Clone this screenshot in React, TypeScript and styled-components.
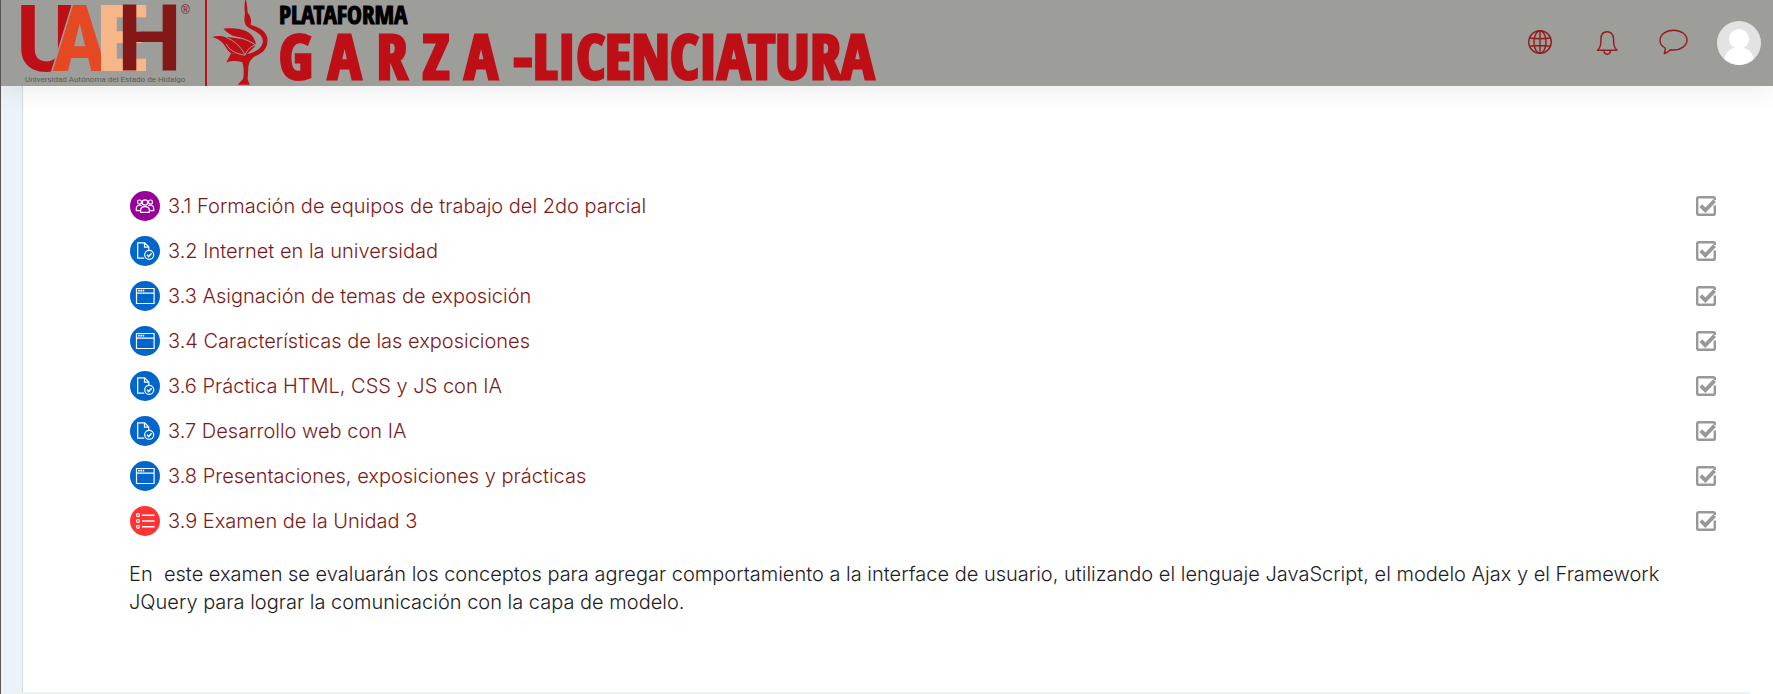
import React from 'react';
import styled, { createGlobalStyle } from 'styled-components';

const GlobalStyle = createGlobalStyle`
  *, *::before, *::after { box-sizing: border-box; }
  body {
    margin: 0;
    background: #fff;
    color: #1d2125;
    font-family: Inter, "Open Sans", sans-serif;
    font-weight: 300;
    font-size: 20px;
    line-height: 28px;
  }
`;

const Page = styled.div`
  min-height: 100vh;
  display: flex;
  flex-direction: column;
  border-left: 1px solid #5c5757;
`;

const Header = styled.header`
  position: sticky;
  top: 0;
  z-index: 2;
  display: flex;
  justify-content: space-between;
  align-items: center;
  height: 86px;
  padding-right: 12px;
  background: #9d9d9a;
  box-shadow: 0 4px 28px rgba(0, 0, 0, 0.08);
`;

const Brand = styled.a`
  display: flex;
  align-items: stretch;
  height: 86px;
  color: #be0f17;
  text-decoration: none;
  white-space: nowrap;
`;

const UniversityLogo = styled.svg`
  flex: none;
  width: 204px;
  height: 86px;
`;

const Divider = styled.span`
  width: 2px;
  background: #be0f17;
`;

const HeronLogo = styled.svg`
  flex: none;
  width: 68px;
  height: 86px;
`;

const Wordmark = styled.span`
  display: flex;
  flex-direction: column;
  gap: 6px;
  padding: 4px 0 0 4px;
  font-family: "Open Sans Condensed", "Open Sans", sans-serif;
  font-weight: 700;
`;

const WordmarkSmall = styled.span`
  color: #000;
  font-size: 25px;
  line-height: 20px;
  -webkit-text-stroke: 1px #000;
`;

const WordmarkLarge = styled.span`
  font-size: 62px;
  line-height: 50px;
  -webkit-text-stroke: 3px #be0f17;
`;

const Tools = styled.nav`
  display: flex;
  align-items: center;
  gap: 22px;
`;

const ToolButton = styled.button`
  display: grid;
  place-items: center;
  width: 44px;
  height: 44px;
  padding: 0;
  border: 0;
  border-radius: 50%;
  background: none;
  color: #951b1e;
  cursor: pointer;
`;

const Body = styled.div`
  flex: 1;
  display: flex;
  flex-direction: column;
  margin-right: 23px;
  padding: 0 0 4px 21px;
  background: #ebf3f8;
`;

const Card = styled.main`
  flex: 1;
  padding: 97px 34px 76px 106px;
  border-left: 1px solid #d0dadd;
  background: #fff;
`;

const ActivityList = styled.ul`
  margin: 0;
  padding: 0 0 0 1px;
  list-style: none;
`;

const ActivityRow = styled.li`
  display: flex;
  align-items: center;
  justify-content: space-between;
  height: 45px;
`;

const ActivityLink = styled.a`
  display: flex;
  align-items: center;
  gap: 8px;
  color: #7c1a19;
  text-decoration: none;
  &:hover { text-decoration: underline; }
`;

const Badge = styled.svg<{ $color: string }>`
  flex: none;
  width: 30px;
  height: 30px;
  border-radius: 50%;
  background: ${(p) => p.$color};
  fill: none;
  stroke: #fff;
  stroke-width: 1.2;
`;

const Completion = styled.label`
  display: grid;
  width: 20px;
  height: 20px;
  color: #989898;
  cursor: pointer;
  > * { grid-area: 1 / 1; }
`;

const CompletionInput = styled.input`
  width: 20px;
  height: 20px;
  margin: 0;
  opacity: 0;
  &:not(:checked) + svg .tick { display: none; }
`;

const Description = styled.p`
  margin: 17px 24px 0 0;
`;

type Kind = 'group' | 'assignment' | 'page' | 'quiz';

const kindColor: Record<Kind, string> = {
  group: '#990099',
  assignment: '#0066cc',
  page: '#0066cc',
  quiz: '#ff3333',
};

const kindGlyph: Record<Kind, React.ReactNode> = {
  group: (
    <>
      <circle cx="15" cy="11.5" r="2.7" />
      <circle cx="9.5" cy="11" r="2" />
      <circle cx="20.5" cy="11" r="2" />
      <path d="M10.700 21.300v-2.200c0-2.300 1.600-3.500 4.300-3.500s4.300 1.200 4.300 3.500v2.200z" />
      <path d="M9.800 19.600H6.300v-2.200c0-2 1.200-3.200 3.200-3.200 1 0 1.700.2 2.200.6M20.200 19.600h3.500v-2.200c0-2-1.200-3.200-3.200-3.200-1 0-1.700.2-2.200.6" />
    </>
  ),
  assignment: (
    <>
      <path d="M14.200 22.200H7.700V6.800h7l4.100 4.200v3M14.500 7v4.200h4.200" />
      <circle cx="19.2" cy="18.8" r="4.5" />
      <path d="m17 18.800 1.700 1.800 2.900-3.400" strokeWidth="1.5" />
    </>
  ),
  page: (
    <>
      <path d="M6.500 7.500h17.600v15H6.500zM6.500 12.100h17.600" />
      <path d="M8.200 9.600h6" strokeWidth="1.6" strokeDasharray="1.6 .6" />
    </>
  ),
  quiz: (
    <>
      <circle cx="8" cy="9.2" r="1.5" />
      <circle cx="8" cy="15" r="1.5" />
      <circle cx="8" cy="20.8" r="1.5" />
      <path d="M12 9.200h12.500M12 15h12.500M12 20.800h12.500" strokeWidth="1.4" />
    </>
  ),
};

const activities: { kind: Kind; title: string }[] = [
  { kind: 'group', title: '3.1 Formación de equipos de trabajo del 2do parcial' },
  { kind: 'assignment', title: '3.2 Internet en la universidad' },
  { kind: 'page', title: '3.3 Asignación de temas de exposición' },
  { kind: 'page', title: '3.4 Características de las exposiciones' },
  { kind: 'assignment', title: '3.6 Práctica HTML, CSS y JS con IA' },
  { kind: 'assignment', title: '3.7 Desarrollo web con IA' },
  { kind: 'page', title: '3.8 Presentaciones, exposiciones y prácticas' },
  { kind: 'quiz', title: '3.9 Examen de la Unidad 3' },
];

const Uaeh = () => (
  <UniversityLogo viewBox="0 0 204 86" aria-label="UAEH">
    <g fontFamily="Roboto, sans-serif" fontWeight="700" fontSize="92">
      <text x="15" y="71" fill="#be0f17">U</text>
      <text x="51" y="71" fill="#e54923" stroke="#9d9d9a" strokeWidth="3" paintOrder="stroke" fontFamily="Roboto Condensed, Roboto, sans-serif" fontWeight="800">A</text>
      <text x="95" y="71" fill="#f7b789" fontWeight="900">E</text>
      <text x="116" y="71" fill="#841817">H</text>
    </g>
    <text x="24" y="82" fill="#5c5c5a" fontFamily="Roboto, sans-serif" fontWeight="400" fontSize="8">
      Universidad Autónoma del Estado de Hidalgo
    </text>
    <text x="180" y="14" fill="#841817" fontFamily="Liberation Sans, sans-serif" fontWeight="400" fontSize="12">®</text>
  </UniversityLogo>
);

const Heron = () => (
  <HeronLogo viewBox="6 0 204 258" aria-hidden="true">
    <g fill="#be0f17">
      <path d="M123 0c4 14 4 28 5 38 9 10 12 22 9 36 18 8 44 14 50 40 3 26-9 42-27 50-20 8-28 20-30 38l-2 36 6 16H98l16-17c4-18 2-36-2-50-16-4-30-6-48 1l14-28 40 4c16-2 32-8 44-18 14-12 16-28 2-43-12-12-36-16-43-30-5-10-2-22-1-34-3-16-1-30 1-41z" />
      <path d="M55 86c44-4 90 2 98 48-26-18-72-18-98-48z" />
      <path d="M22 111c14-5 28-3 38 0 34 2 74 8 92 26l-30 29-44-6c-22-18-16-36-56-49z" />
    </g>
    <g fill="none" stroke="#9d9d9a" strokeWidth="3">
      <path d="M62 109c34-1 66 8 92 28-14-2-26 10-34 28-12-26-36-46-58-53" />
      <path d="M64 132c8 18 26 28 56 34" />
    </g>
  </HeronLogo>
);

const GlobeIcon = () => (
  <svg width="26" height="26" viewBox="0 0 26 26" fill="none" stroke="currentColor" strokeWidth="1.4" aria-hidden="true">
    <circle cx="12" cy="12" r="11.3" />
    <ellipse cx="12" cy="12" rx="6" ry="11.300" />
    <path d="M12 .6v22.800M1.600 8q10.400 1.600 20.800 0M1.600 16.200q10.400-1.400 20.800 0" />
  </svg>
);

const BellIcon = () => (
  <svg width="24" height="26" viewBox="0 0 24 26" fill="none" stroke="currentColor" strokeWidth="1.4" strokeLinejoin="round" aria-hidden="true">
    <path d="M2.500 20.300h19.500c-3-3-3.400-5-3.400-11C18.600 4.500 16 1.800 12.200 1.800S5.900 4.500 5.900 9.300c0 6-.4 8-3.400 11zM9 20.500c0 2.200 1.400 3.700 3.200 3.700s3.200-1.500 3.200-3.700" />
  </svg>
);

const ChatIcon = () => (
  <svg width="30" height="28" viewBox="0 0 30 28" fill="none" stroke="currentColor" strokeWidth="1.4" strokeLinejoin="round" aria-hidden="true">
    <path d="M15.500 1.200c7.500 0 13.500 4.300 13.500 9.900S23 21 15.500 21c-1 0-2.200-.1-3.200-.2-1.800 2-3.600 3.500-6 3.700.8-2 1.200-3.700.9-5.500-3.300-1.800-5.200-4.500-5.200-7.600C2 5.500 8 1.200 15.500 1.200z" />
  </svg>
);

const Avatar = () => (
  <svg width="44" height="44" viewBox="0 0 44 44" aria-hidden="true">
    <clipPath id="avatar-clip"><circle cx="22" cy="22" r="22" /></clipPath>
    <g clipPath="url(#avatar-clip)">
      <rect width="44" height="44" fill="#e3e3e3" />
      <circle cx="22" cy="18" r="10" fill="#fff" />
      <path d="M7 40c1-8 6-13 11-13h8c5 0 10 5 11 13v4H7z" fill="#fff" />
    </g>
  </svg>
);

const CheckGlyph = () => (
  <svg width="20" height="20" viewBox="0 0 20 20" fill="none" stroke="currentColor" aria-hidden="true">
    <path d="M18.900 4V2.800Q18.900 1.200 17.200 1.200H2.800Q1.200 1.200 1.200 2.800V17.200Q1.200 18.800 2.800 18.800H17.200Q18.800 18.800 18.800 17.200V9.500" strokeWidth="2.400" />
    <path className="tick" d="m4.800 9.600 4.500 4.600 9.300-9.600" strokeWidth="3.800" />
  </svg>
);

export default function App() {
  return (
    <Page>
      <GlobalStyle />
      <Header>
        <Brand href="#inicio">
          <Uaeh />
          <Divider />
          <Heron />
          <Wordmark>
            <WordmarkSmall>PLATAFORMA</WordmarkSmall>
            <WordmarkLarge>G A R Z A -LICENCIATURA</WordmarkLarge>
          </Wordmark>
        </Brand>
        <Tools aria-label="Herramientas">
          <ToolButton type="button" aria-label="Idioma"><GlobeIcon /></ToolButton>
          <ToolButton type="button" aria-label="Notificaciones"><BellIcon /></ToolButton>
          <ToolButton type="button" aria-label="Mensajes"><ChatIcon /></ToolButton>
          <ToolButton type="button" aria-label="Usuario"><Avatar /></ToolButton>
        </Tools>
      </Header>
      <Body>
        <Card>
          <ActivityList>
            {activities.map(({ kind, title }) => (
              <ActivityRow key={title}>
                <ActivityLink href="#actividad">
                  <Badge $color={kindColor[kind]} viewBox="0 0 30 30" aria-hidden="true">{kindGlyph[kind]}</Badge>
                  <span>{title}</span>
                </ActivityLink>
                <Completion>
                  <CompletionInput type="checkbox" defaultChecked aria-label={title} />
                  <CheckGlyph />
                </Completion>
              </ActivityRow>
            ))}
          </ActivityList>
          <Description>
            En&nbsp; este examen se evaluarán los conceptos para agregar comportamiento a la interface de usuario,
            utilizando el lenguaje JavaScript, el modelo Ajax y el Framework JQuery para lograr la comunicación con la
            capa de modelo.
          </Description>
        </Card>
      </Body>
    </Page>
  );
}
